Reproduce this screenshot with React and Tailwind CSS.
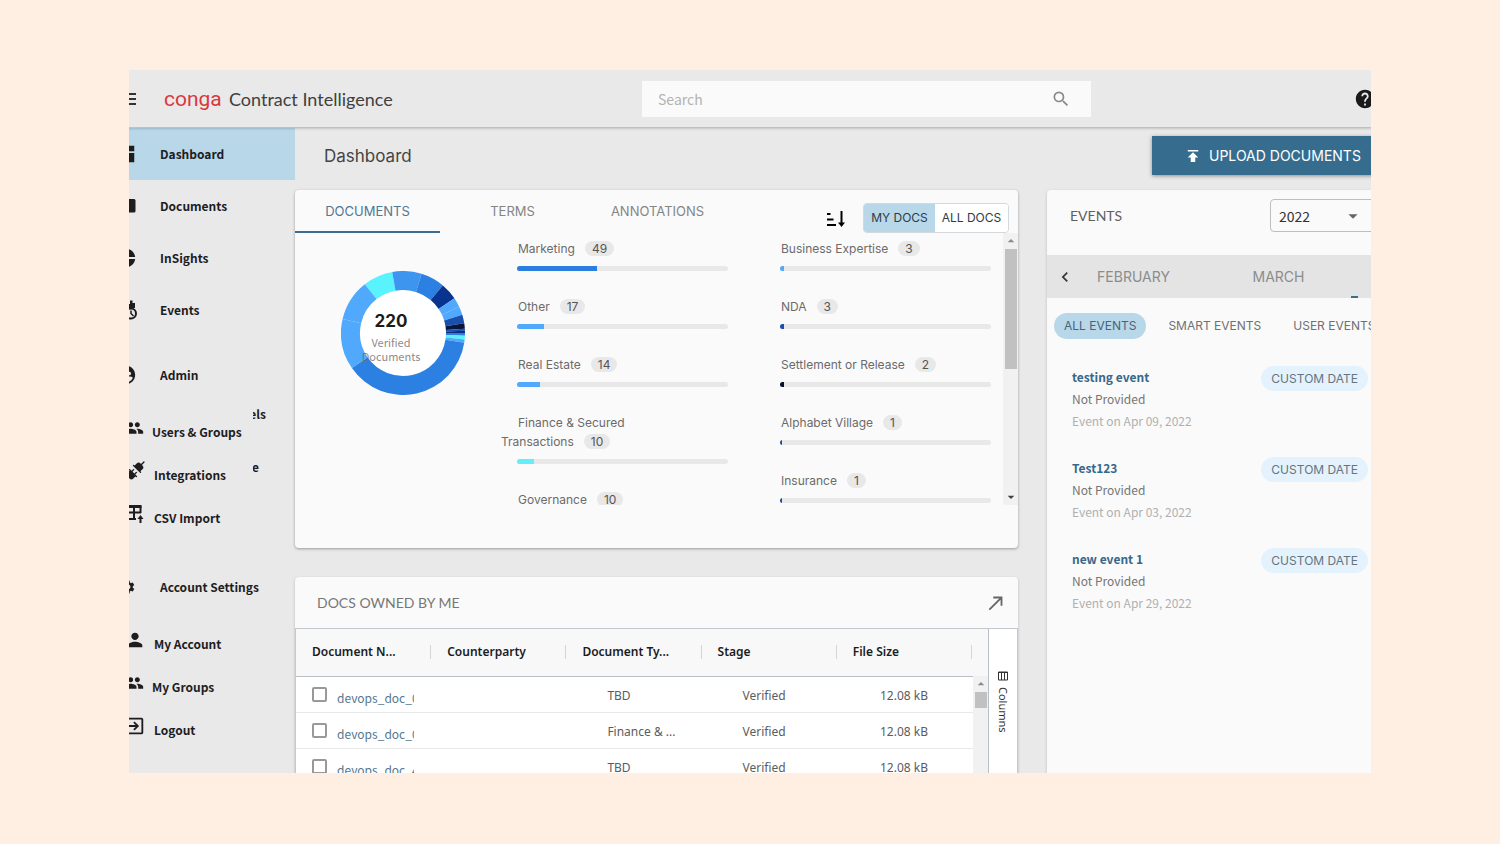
import React from "react";
import {
  MdMenu,
  MdDashboard,
  MdPieChart,
  MdSupervisedUserCircle,
  MdPeople,
  MdPerson,
  MdExitToApp,
  MdSettings,
  MdSearch,
  MdHelp,
  MdPublish,
  MdCallMade,
  MdChevronLeft,
  MdArrowDropDown,
} from "react-icons/md";
import { PiPlugsFill } from "react-icons/pi";

const SANS = "font-['Noto_Sans_CJK_SC',sans-serif]";
const WIDE = "font-['Inter',sans-serif]";
const GRID = "font-['Noto_Sans','Open_Sans',sans-serif]";

function DocumentsIcon() {
  return (
    <svg width="22" height="22" viewBox="0 0 22 22" fill="currentColor" aria-hidden="true">
      <path d="M2 6a2 2 0 0 1 2-2h15a1.500 1.500 0 0 1 1.500 1.500V16a1.500 1.500 0 0 1-1.500 1.500H4A2 2 0 0 1 2 16z" />
    </svg>
  );
}

function EventsIcon() {
  return (
    <svg width="22" height="22" viewBox="0 0 22 22" fill="none" stroke="currentColor" aria-hidden="true">
      <path d="M2 5h3V2h3v3h7V1.500h2.500V4H20v5H2z" fill="currentColor" stroke="none" />
      <circle cx="16" cy="14.500" r="5" strokeWidth="2" />
      <path d="M16 11.500V14.500l2.500 2.500" strokeWidth="1.500" />
    </svg>
  );
}

function CsvIcon() {
  return (
    <svg width="22" height="22" viewBox="0 0 22 22" fill="none" stroke="currentColor" strokeWidth="2" aria-hidden="true">
      <path d="M2 3.500h15.500" strokeWidth="3" />
      <path d="M2 2v15M16.500 3v7M2 9.500h15M10 4v12.500M1 16h11" />
      <path d="M16.500 20v-5" />
      <path d="M13.500 16l3-4 3 4z" fill="currentColor" stroke="none" />
    </svg>
  );
}

function SortIcon() {
  return (
    <svg width="20" height="18" viewBox="0 0 20 18" fill="none" stroke="currentColor" strokeWidth="2" aria-hidden="true">
      <path d="M1 4h3.500M1 9.500h6.500M1 15h9M15.500 1v13" />
      <path d="M12 12.500h7L15.500 17z" fill="currentColor" stroke="none" />
    </svg>
  );
}

function ColumnsIcon() {
  return (
    <svg width="10" height="10" viewBox="0 0 10 10" fill="none" stroke="currentColor" aria-hidden="true">
      <path d="M0.500 1h9v8h-9zM3.500 1v8M6.500 1v8M0 1.500h10" />
    </svg>
  );
}

const mainNav = [
  { label: "Dashboard", icon: <MdDashboard size={22} />, active: true },
  { label: "Documents", icon: <DocumentsIcon /> },
  { label: "InSights", icon: <MdPieChart size={22} /> },
  { label: "Events", icon: <EventsIcon /> },
];

const adminNav = [
  { label: "Users & Groups", icon: <MdPeople size={20} /> },
  { label: "Integrations", icon: <PiPlugsFill size={22} /> },
  { label: "CSV Import", icon: <CsvIcon /> },
];

const accountNav = [
  { label: "My Account", icon: <MdPerson size={22} /> },
  { label: "My Groups", icon: <MdPeople size={20} /> },
  { label: "Logout", icon: <MdExitToApp size={22} /> },
];

function NavItem({ label, icon, active }) {
  return (
    <a
      href="#"
      aria-current={active ? "page" : undefined}
      className={`flex h-[52px] items-center text-xs font-bold ${active ? "bg-[#b8d7e9]" : ""}`}
    >
      <span className="w-[45px] shrink-0">{icon}</span>
      <span className="leading-5">{label}</span>
    </a>
  );
}

function SubNavItem({ label, icon }) {
  return (
    <a href="#" className="flex h-[43px] items-center gap-2 pl-[9px] text-xs font-bold">
      <span className="shrink-0 pb-[7px]">{icon}</span>
      <span className="leading-5">{label}</span>
    </a>
  );
}

function Sidebar() {
  return (
    <nav className={`w-[180px] shrink-0 text-[#1d1d1f] ${SANS}`}>
      {mainNav.map((item) => (
        <NavItem key={item.label} {...item} />
      ))}
      <div className="mt-[13px]">
        <NavItem label="Admin" icon={<MdSupervisedUserCircle size={22} />} />
      </div>
      <div className="relative mt-[9px]">
        {adminNav.map((item) => (
          <SubNavItem key={item.label} {...item} />
        ))}
        <span className="absolute left-[138px] -top-[6px] flex w-[13px] justify-end overflow-hidden text-xs leading-5 font-bold">els</span>
        <span className="absolute left-[138px] top-[47px] flex w-[6px] justify-end overflow-hidden text-xs leading-5 font-bold">e</span>
      </div>
      <div className="mt-[22px]">
        <NavItem label="Account Settings" icon={<MdSettings size={16} className="ml-[5px]" />} />
      </div>
      <div className="mt-[9px]">
        {accountNav.map((item) => (
          <SubNavItem key={item.label} {...item} />
        ))}
      </div>
    </nav>
  );
}

function Header() {
  return (
    <header className="relative z-10 flex h-[57px] shrink-0 items-center bg-[#e9e9e9] shadow-[0_1px_3px_rgba(0,0,0,0.28)]">
      <div className="flex w-[527px] shrink-0 items-center">
        <button type="button" aria-label="Menu" className="w-[49px] text-[#333]">
          <MdMenu size={24} />
        </button>
        <span className="w-[65px] font-['Roboto',sans-serif] text-[21px] leading-6 text-[#d9383f]">conga</span>
        <span className="font-['Lato',sans-serif] text-lg leading-6 text-[#3f3f3f]">Contract Intelligence</span>
      </div>
      <label className="flex h-9 max-w-[449px] flex-1 items-center bg-[#fafafa] pr-5">
        <input
          type="search"
          placeholder="Search"
          aria-label="Search"
          className={`min-w-0 flex-1 bg-transparent pl-4 text-sm leading-5 outline-none placeholder:text-[#b3b3b3] ${SANS}`}
        />
        <MdSearch size={20} className="text-[#8a8a8a]" />
      </label>
      <button type="button" aria-label="Help" className="mr-[19px] ml-auto text-[#1a1a1a]">
        <MdHelp size={22} />
      </button>
    </header>
  );
}

/* Angles are degrees clockwise from twelve o'clock. */
const slices = [
  [-38, -10, "#58f3fd"],
  [-10, 17.5, "#3d95f0"],
  [17.5, 40, "#2b80e2"],
  [40, 56, "#08348f"],
  [56, 65, "#50a9fc"],
  [65, 73, "#50a9fc"],
  [73, 81, "#1a4fae"],
  [81, 86, "#07163f"],
  [86, 88, "#1a4fae"],
  [88, 90, "#0a2f80"],
  [90, 92.5, "#2b80e2"],
  [92.5, 96, "#58f3fd"],
  [96, 99, "#50a9fc"],
  [99, 235.5, "#2b80e2"],
  [235.5, 283, "#50a9fc"],
  [283, 322, "#50a9fc"],
];

function arc(from, to) {
  const point = (deg, r) => {
    const a = (deg * Math.PI) / 180;
    return `${(62 + r * Math.sin(a)).toFixed(2)} ${(62 - r * Math.cos(a)).toFixed(2)}`;
  };
  const large = to - from > 180 ? 1 : 0;
  return `M${point(from, 62)}A62 62 0 ${large} 1 ${point(to, 62)}L${point(to, 43)}A43 43 0 ${large} 0 ${point(from, 43)}Z`;
}

function Donut() {
  return (
    <div className="relative mt-[38px] ml-[46px] h-[124px] w-[124px]">
      <svg width="124" height="124" viewBox="0 0 124 124" aria-hidden="true">
        <circle cx="62" cy="62" r="43" fill="#fff" />
        {slices.map(([from, to, color]) => (
          <path key={from} d={arc(from, to)} fill={color} />
        ))}
      </svg>
      <div className="absolute inset-y-0 left-0 flex w-[100px] flex-col items-center pt-[38px] text-center">
        <strong className={`text-[17px] leading-6 text-[#1c1c1c] ${WIDE}`}>220</strong>
        <span className={`mt-[2px] text-[11px] leading-[14px] text-[#6b6b6b]/80 ${SANS}`}>
          Verified
          <br />
          Documents
        </span>
      </div>
    </div>
  );
}

const leftTypes = [
  { label: "Marketing", count: 49, share: 38, color: "#2b7de0" },
  { label: "Other", count: 17, share: 13, color: "#50a9fc" },
  { label: "Real Estate", count: 14, share: 11, color: "#50a9fc" },
  { label: "Finance & Secured", rest: "Transactions", count: 10, share: 8, color: "#62effb" },
  { label: "Governance", count: 10, share: 8, color: "#3d95f0" },
];

const rightTypes = [
  { label: "Business Expertise", count: 3, share: 2, color: "#50a9fc" },
  { label: "NDA", count: 3, share: 2, color: "#1a4fae" },
  { label: "Settlement or Release", count: 2, share: 2, color: "#07112f" },
  { label: "Alphabet Village", count: 1, share: 1, color: "#1a4f9a" },
  { label: "Insurance", count: 1, share: 1, color: "#1a4f9a" },
];

function TypeList({ items }) {
  return (
    <ul className="flex-1">
      {items.map(({ label, rest, count, share, color }) => (
        <li key={label} className="mb-[26px]">
          <div className={`-ml-4 indent-[17px] text-xs leading-[19px] whitespace-nowrap text-[#6b6b6b] ${WIDE}`}>
            {label}
            {rest && (
              <>
                <br />
                {rest}
              </>
            )}
            <span className="ml-[10px] inline-block rounded-full bg-[#e8e8e8] px-[7px] indent-0 leading-[15px] text-[#555]">{count}</span>
          </div>
          <div className="mt-2 h-[5px] overflow-hidden rounded-full bg-[#e8e8e8]">
            <div className="h-full" style={{ width: `${share}%`, backgroundColor: color }} />
          </div>
        </li>
      ))}
    </ul>
  );
}

function DocumentsCard() {
  return (
    <section className="flex h-[358px] shrink-0 flex-col rounded bg-[#fafafa] shadow-[0_1px_3px_rgba(0,0,0,0.35)]">
      <div className={`flex h-[43px] shrink-0 items-start ${WIDE}`}>
        <div role="tablist" className="flex text-[13px] leading-5 text-[#858585]">
          <button type="button" role="tab" aria-selected="true" className="h-[43px] w-[145px] border-b-2 border-[#3a6d91] text-[#4f7895]">
            DOCUMENTS
          </button>
          <button type="button" role="tab" aria-selected="false" className="h-[43px] w-[145px] border-b-2 border-transparent">
            TERMS
          </button>
          <button type="button" role="tab" aria-selected="false" className="h-[43px] w-[145px] border-b-2 border-transparent">
            ANNOTATIONS
          </button>
        </div>
        <button type="button" aria-label="Sort" className="mt-5 mr-[17px] ml-auto text-black">
          <SortIcon />
        </button>
        <div className="mt-[13px] mr-[9px] flex h-[30px] overflow-hidden rounded border border-[#d2d8dc] text-xs text-[#2f3b44]">
          <button type="button" aria-pressed="true" className="w-[71px] bg-[#b8d7e9]">
            MY DOCS
          </button>
          <button type="button" aria-pressed="false" className="w-[73px] bg-white">
            ALL DOCS
          </button>
        </div>
      </div>
      <div className="flex h-[272px] overflow-hidden">
        <div className="w-[222px] shrink-0">
          <Donut />
        </div>
        <div className="flex flex-1 gap-[52px] pt-[6px] pr-3">
          <TypeList items={leftTypes} />
          <TypeList items={rightTypes} />
        </div>
        <div className="flex w-[15px] flex-col items-center bg-[#f1f1f1]" aria-hidden="true">
          <MdArrowDropDown size={16} className="rotate-180 text-[#8a8a8a]" />
          <div className="h-[120px] w-3 bg-[#c1c1c1]" />
          <MdArrowDropDown size={16} className="mt-auto text-[#404040]" />
        </div>
      </div>
    </section>
  );
}

const columns = ["Document N...", "Counterparty", "Document Ty...", "Stage", "File Size"];

const rows = [
  { name: "devops_doc_0", type: "TBD", stage: "Verified", size: "12.08 kB" },
  { name: "devops_doc_0", type: "Finance & ...", stage: "Verified", size: "12.08 kB" },
  { name: "devops_doc_4", type: "TBD", stage: "Verified", size: "12.08 kB" },
];

function OwnedDocsCard() {
  return (
    <section className="shrink-0 rounded-t bg-[#fafafa] shadow-[0_1px_3px_rgba(0,0,0,0.2)]">
      <div className="flex h-[51px] items-center justify-between pt-px pr-[11px] pl-[22px]">
        <h2 className="font-['Lato',sans-serif] text-sm leading-5 text-[#777]">DOCS OWNED BY ME</h2>
        <button type="button" aria-label="Open list" className="text-[#666]">
          <MdCallMade size={22} />
        </button>
      </div>
      <div className={`flex border border-[#c3c7cf] bg-white ${GRID}`}>
        <div className="relative flex-1">
          <table className="w-full table-fixed border-collapse text-left text-xs">
            <thead>
              <tr className="h-[47px] border-b border-[#babfc7] bg-[#f8f8f8] text-[#181d1f]">
                {columns.map((name) => (
                  <th key={name} scope="col" className="p-0 font-semibold">
                    <div className="flex h-[14px] items-center border-r border-[#d3d6da] pl-4 whitespace-nowrap">{name}</div>
                  </th>
                ))}
                <td className="w-[16px]" />
              </tr>
            </thead>
            <tbody className="text-[#5c5c5c]">
              {rows.map((row, i) => (
                <tr key={i} className="h-9 border-b border-[#e6e8ea]">
                  <td className="p-0">
                    <div className="flex items-center gap-[10px] pl-4">
                      <input
                        type="checkbox"
                        aria-label={`Select row ${i + 1}`}
                        className="h-[15px] w-[15px] appearance-none rounded-[2px] border-2 border-[#999] bg-white"
                      />
                      <a href="#" className="mt-2 w-[77px] overflow-hidden text-xs leading-5 whitespace-nowrap text-[#56788f] font-['Noto_Sans_CJK_SC',sans-serif]">
                        {row.name}
                      </a>
                    </div>
                  </td>
                  <td className="p-0" />
                  <td className="p-0 pt-[3px] pl-[41px] whitespace-nowrap">{row.type}</td>
                  <td className="p-0 pt-[3px] pl-[41px]">{row.stage}</td>
                  <td className="p-0 pt-[3px] pr-[44px] text-right whitespace-nowrap">{row.size}</td>
                  <td />
                </tr>
              ))}
            </tbody>
          </table>
          <div className="absolute top-[47px] right-0 bottom-0 flex w-[15px] flex-col items-center bg-[#f1f1f1]" aria-hidden="true">
            <MdArrowDropDown size={16} className="rotate-180 text-[#8a8a8a]" />
            <div className="h-4 w-3 bg-[#c1c1c1]" />
          </div>
        </div>
        <div className="flex w-[29px] shrink-0 justify-center border-l border-[#babfc7]">
          <button type="button" className="flex flex-col items-center justify-start gap-1.5 pt-[42px] text-[11px] text-[#333]">
            <ColumnsIcon />
            <span className="leading-4 [writing-mode:vertical-rl]">Columns</span>
          </button>
        </div>
      </div>
    </section>
  );
}

const events = [
  { title: "testing event", date: "Apr 09, 2022" },
  { title: "Test123", date: "Apr 03, 2022" },
  { title: "new event 1", date: "Apr 29, 2022" },
];

function EventsCard() {
  return (
    <section className="rounded-tl bg-[#fafafa] shadow-[0_1px_3px_rgba(0,0,0,0.2)]">
      <div className="flex h-[65px] items-start justify-between pt-[9px] pr-[15px] pl-[23px]">
        <h2 className="font-['Lato',sans-serif] text-sm leading-[34px] text-[#5f5f5f]">EVENTS</h2>
        <div className="relative">
          <select
            aria-label="Year"
            defaultValue="2022"
            className={`h-[33px] w-[110px] appearance-none rounded border border-[#bdbdbd] pl-2 text-sm text-[#333] ${SANS}`}
          >
            <option>2022</option>
          </select>
          <MdArrowDropDown size={22} className="pointer-events-none absolute top-1.5 right-4 text-[#666]" />
        </div>
      </div>
      <div className={`flex h-[43px] overflow-hidden bg-[#e4e4e4] text-sm text-[#8c8c8c] ${WIDE}`}>
        <button type="button" aria-label="Previous month" className="z-10 -mr-[22px] flex w-9 shrink-0 items-center justify-center text-[#333]">
          <MdChevronLeft size={20} />
        </button>
        <button type="button" className="w-[145px] shrink-0">FEBRUARY</button>
        <button type="button" className="w-[145px] shrink-0">MARCH</button>
        <span className="h-[2px] w-[7px] self-end bg-[#3a6d91]" />
      </div>
      <div className={`flex gap-3 pt-[15px] pl-[7px] text-xs whitespace-nowrap text-[#707070] ${WIDE}`}>
        <button type="button" aria-pressed="true" className="h-[26px] rounded-full bg-[#b8d7e9] px-[10px] text-[#46647a]">
          ALL EVENTS
        </button>
        <button type="button" aria-pressed="false" className="h-[26px] px-[10px]">SMART EVENTS</button>
        <button type="button" aria-pressed="false" className="h-[26px] px-[10px]">USER EVENTS</button>
      </div>
      <ul className={`flex flex-col gap-[25px] pt-[27px] pr-[27px] pl-[25px] text-xs leading-[22px] ${SANS}`}>
        {events.map((event) => (
          <li key={event.title} className="flex items-start justify-between">
            <div>
              <h3 className="font-bold text-[#37688a]">{event.title}</h3>
              <p className="text-[#757575]">Not Provided</p>
              <p className="text-[#b0b0b0]">Event on {event.date}</p>
            </div>
            <span className={`rounded-full bg-[#e3f2fd] px-[10px] text-xs leading-[25px] text-[#66747e] ${WIDE}`}>CUSTOM DATE</span>
          </li>
        ))}
      </ul>
    </section>
  );
}

export default function App() {
  return (
    <div className="h-screen bg-[#ffefe2] px-[129px] pt-[70px] pb-[71px]">
      <div className="h-full overflow-hidden bg-[#e9e9e9]">
        <div className="-mr-6 -ml-[14px] flex h-full flex-col">
          <Header />
          <div className="flex min-h-0 flex-1 pt-px">
            <Sidebar />
            <main className="flex min-w-0 flex-1 flex-col">
              <div className={`flex h-[62px] shrink-0 items-start justify-between pt-2 pl-[29px] ${WIDE}`}>
                <h1 className="text-[17px] leading-10 text-[#444]">Dashboard</h1>
                <button
                  type="button"
                  className="flex h-[39px] w-[243px] items-center gap-[7px] bg-[#366d8f] pl-8 text-sm text-white shadow-[0_1px_4px_rgba(0,0,0,0.4)]"
                >
                  <MdPublish size={18} />
                  UPLOAD DOCUMENTS
                </button>
              </div>
              <div className="grid min-h-0 flex-1 grid-cols-[minmax(0,1fr)_348px] gap-[29px]">
                <div className="flex min-h-0 flex-col gap-[29px]">
                  <DocumentsCard />
                  <OwnedDocsCard />
                </div>
                <EventsCard />
              </div>
            </main>
          </div>
        </div>
      </div>
    </div>
  );
}
